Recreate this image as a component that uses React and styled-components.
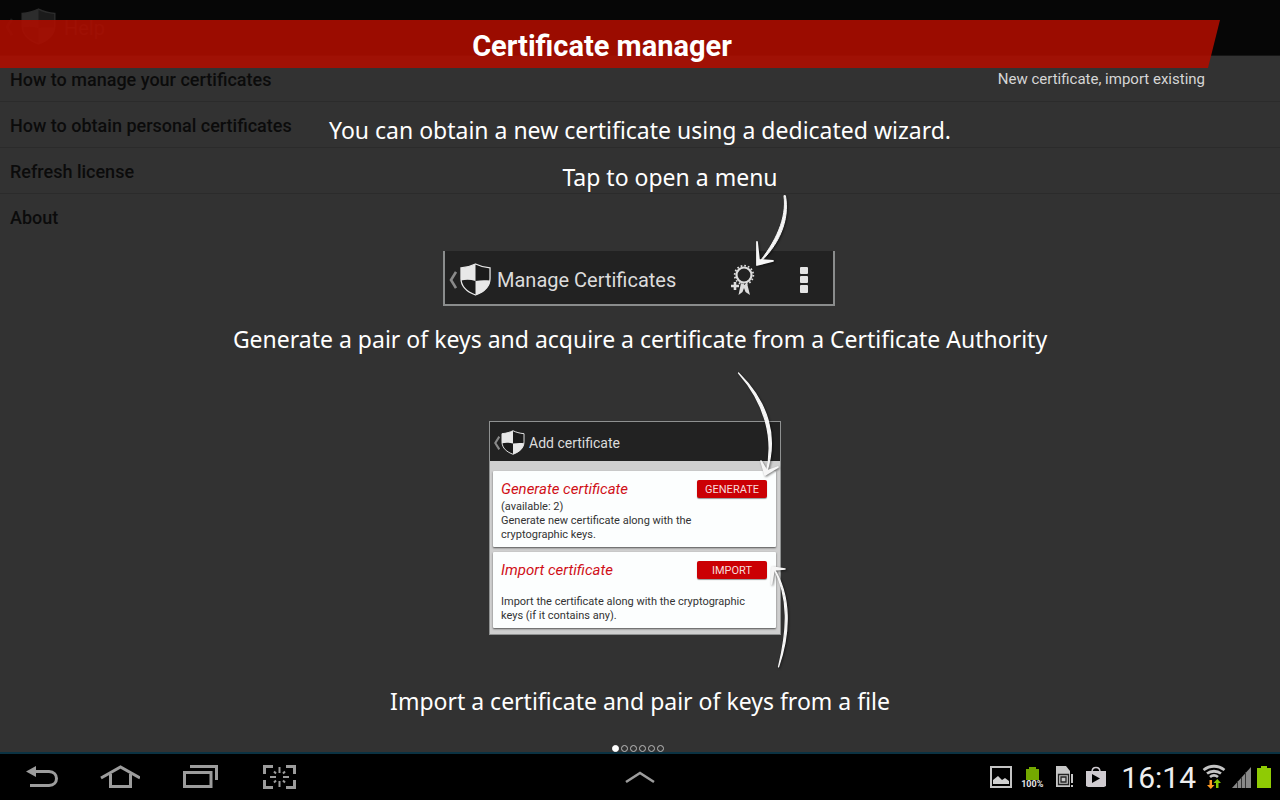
import React from "react";
import styled, { createGlobalStyle } from "styled-components";

const Global = createGlobalStyle`
  * { box-sizing: border-box; }
  body { margin: 0; background: #000; font-family: Roboto, sans-serif; }
  h1, h2, h3, p, ul { margin: 0; padding: 0; font-weight: normal; }
  svg { display: block; flex: none; }
`;

const Screen = styled.div`
  min-height: 100vh;
  display: grid;
  grid-template-rows: 1fr auto;
`;

const Stage = styled.div`
  display: grid;
  grid-template-columns: minmax(0, 1fr);
  background: #323232;
`;

const HelpPage = styled.div`
  grid-area: 1 / 1;
`;

const HelpHeader = styled.header`
  height: 56px;
  padding: 0 4px 2px;
  display: flex;
  align-items: center;
  gap: 8px;
  background: #060606;
  border-bottom: 1px solid #161616;
  color: #282828;
`;

const HelpTitle = styled.h2`
  padding-top: 2px;
  font-size: 20px;
`;

const HelpList = styled.ul`
  list-style: none;
`;

const HelpItem = styled.li`
  height: 46px;
  padding: 2px 10px 0;
  display: flex;
  align-items: center;
  border-bottom: 1px solid #2b2b2b;
  &:last-child { border-bottom-color: transparent; }
`;

const HelpLink = styled.a`
  color: #0b0b0b;
  font-size: 18px;
  font-weight: 500;
  text-decoration: none;
`;

const Tutorial = styled.main`
  grid-area: 1 / 1;
  z-index: 1;
  padding-top: 20px;
  display: flex;
  flex-direction: column;
  align-items: center;
  color: #fff;
`;

const Banner = styled.h1`
  align-self: stretch;
  margin-right: 60px;
  padding: 4px 60px 0 44px;
  height: 48px;
  display: flex;
  align-items: center;
  justify-content: center;
  background: rgba(172, 13, 0, 0.9);
  clip-path: polygon(0 0, 100% 0, calc(100% - 12px) 100%, 0 100%);
  font-size: 29px;
  font-weight: 700;
`;

const BannerNote = styled.p`
  align-self: flex-end;
  margin-right: 75px;
  font-size: 15px;
  line-height: 22px;
  color: #d6d6d6;
`;

const Hint = styled.p`
  margin-top: ${(p) => p.$top}px;
  padding-left: ${(p) => p.$indent || 0}px;
  font-family: "Noto Sans", sans-serif;
  font-size: 23px;
  line-height: 32px;
  text-align: center;
`;

const Figure = styled.figure`
  position: relative;
  width: ${(p) => p.$width}px;
  margin: ${(p) => p.$top}px ${(p) => p.$right || 0}px 0 0;
`;

const Arrow = styled.svg`
  position: absolute;
  left: ${(p) => p.$left}px;
  top: ${(p) => p.$top}px;
  fill: #f6f6f6;
  stroke: #f6f6f6;
  stroke-linecap: round;
  stroke-linejoin: round;
  filter: drop-shadow(1px 1px 1px rgba(0, 0, 0, 0.5));
`;

const ActionBar = styled.div`
  height: 55px;
  padding: 4px 24px 0 3px;
  display: flex;
  align-items: center;
  background: #222;
  border: 2px solid #8a8c8c;
  border-top: 0;
`;

const ActionTitle = styled.h3`
  margin-left: ${(p) => p.$gap}px;
  flex: 1;
  font-size: ${(p) => p.$size}px;
  color: #dcdcdc;
`;

const IconButton = styled.button`
  padding: 0;
  border: 0;
  background: none;
  margin-left: ${(p) => p.$left || 0}px;
`;

const Dialog = styled.div`
  background: #cfcfcf;
  border: 1px solid #8f9191;
  padding-bottom: 6px;
`;

const DialogBar = styled.div`
  height: 39px;
  padding: 2px 2px 0;
  display: flex;
  align-items: center;
  background: #222;
`;

const Card = styled.section`
  height: 76px;
  margin: ${(p) => p.$top}px 4px 0 3px;
  padding: 8px 9px 0 8px;
  background: #fcfefe;
  border-radius: 1px;
  box-shadow: 0 1px 2px rgba(0, 0, 0, 0.6);
`;

const CardHead = styled.div`
  display: flex;
  align-items: center;
  justify-content: space-between;
  height: 20px;
`;

const CardTitle = styled.h3`
  font-size: 15px;
  font-style: italic;
  color: #d01018;
`;

const CardButton = styled.button`
  width: 70px;
  height: 18px;
  padding: 0;
  border: 0;
  border-radius: 2px;
  background: #cb0004;
  box-shadow: 0 1px 1px rgba(0, 0, 0, 0.4);
  color: #f6dcdc;
  font: 11px/20px Roboto, sans-serif;
`;

const CardText = styled.p`
  margin-top: ${(p) => p.$top}px;
  font-size: 11px;
  line-height: 14px;
  color: #333;
  white-space: pre-line;
`;

const Dots = styled.div`
  margin-top: auto;
  padding-right: 4px;
  height: 8px;
  display: flex;
  align-items: flex-end;
  gap: 2px;
`;

const Dot = styled.button`
  width: 7px;
  height: 7px;
  padding: 0;
  border: 1px solid ${(p) => (p.$on ? "#fff" : "#bbb")};
  border-radius: 50%;
  background: ${(p) => (p.$on ? "#fff" : "none")};
`;

const NavBar = styled.footer`
  height: 48px;
  display: grid;
  grid-template-columns: 1fr auto 1fr;
  align-items: center;
  background: #000;
  border-top: 2px solid #0b3242;
`;

const NavKeys = styled.nav`
  display: flex;
`;

const NavKey = styled.button`
  width: 80px;
  height: 46px;
  padding: 0;
  border: 0;
  background: none;
  display: flex;
  align-items: center;
  justify-content: center;
  svg { fill: none; stroke: #9c9c9c; stroke-width: 3; }
`;

const Status = styled.div`
  display: flex;
  align-items: center;
  justify-content: flex-end;
  padding-right: 9px;
`;

const StatusIcon = styled.svg`
  margin-left: ${(p) => p.$gap}px;
`;

const Charge = styled.div`
  margin-left: 8px;
  width: 24px;
  display: flex;
  flex-direction: column;
  align-items: center;
  font: 700 9px/8px Roboto, sans-serif;
  color: #e4e4e4;
`;

const Clock = styled.time`
  margin-left: 15px;
  padding-top: 2px;
  font-size: 30px;
  line-height: 44px;
  color: #eee;
`;

function Shield({ width, height, light = "#e8e8e8" }) {
  return (
    <svg width={width} height={height} viewBox="0 0 32 34">
      <path d="M16 1 C20 3 25 4.500 31 5 V16 C31 25 24 30 16 33 C8 30 1 25 1 16 V5 C7 4.500 12 3 16 1Z" fill="#1b1b1b" stroke={light} strokeWidth="1.300" />
      <path d="M16 1 V18.500 C11 17 6 17 1 18 V5 C7 4.500 12 3 16 1Z" fill={light} />
      <path d="M16 18.500 C21 17.500 26 17.500 31 18 C30 26 23 31 16 33Z" fill={light} />
    </svg>
  );
}

function Back({ height = 20, color = "#8a8a8a" }) {
  return (
    <svg width="9" height={height} viewBox="0 0 9 20" fill="none" stroke={color} strokeWidth="2.600">
      <path d="M8 2 L3 10 L8 18" />
    </svg>
  );
}

function Ribbon() {
  return (
    <svg width="26" height="32" viewBox="0 0 26 32" fill="none" stroke="#ddd">
      <circle cx="14" cy="11" r="7.500" strokeWidth="2.200" />
      <circle cx="14" cy="11" r="9.300" strokeWidth="1.800" strokeDasharray="1.700 1.950" />
      <path d="M11 19 L8.500 31 L12.500 28 L14 24 L15.500 28 L20 31 L17 19 L14 21Z" fill="#ddd" stroke="none" />
      <path d="M5 18 V26 M1 22 H9" strokeWidth="2.600" />
    </svg>
  );
}

const helpItems = [
  "How to manage your certificates",
  "How to obtain personal certificates",
  "Refresh license",
  "About",
];

export default function App() {
  return (
    <Screen>
      <Global />
      <Stage>
        <HelpPage>
          <HelpHeader>
            <Back color="#1a1a1a" />
            <Shield width={35} height={37} light="#2c2c2c" />
            <HelpTitle>Help</HelpTitle>
          </HelpHeader>
          <HelpList>
            {helpItems.map((t) => (
              <HelpItem key={t}><HelpLink href="#">{t}</HelpLink></HelpItem>
            ))}
          </HelpList>
        </HelpPage>

        <Tutorial>
          <Banner>Certificate manager</Banner>
          <BannerNote>New certificate, import existing</BannerNote>
          <Hint $top={24}>You can obtain a new certificate using a dedicated wizard.</Hint>
          <Hint $top={15} $indent={60}>Tap to open a menu</Hint>

          <Figure $width={392} $top={58} $right={2}>
            <ActionBar>
              <Back />
              <IconButton as="span" $left={3}><Shield width={31} height={33} /></IconButton>
              <ActionTitle $gap={6} $size={20}>Manage Certificates</ActionTitle>
              <IconButton aria-label="Add certificate"><Ribbon /></IconButton>
              <IconButton aria-label="More" $left={43}>
                <svg width="10" height="28" viewBox="0 0 10 28" fill="#e4e4e4">
                  <rect x="1" y="1" width="8" height="7" rx="1" />
                  <rect x="1" y="10" width="8" height="7" rx="1" />
                  <rect x="1" y="19" width="8" height="8" rx="1" />
                </svg>
              </IconButton>
            </ActionBar>
            <Arrow $left={307} $top={-61} width="45" height="80" viewBox="750 190 45 80">
              <path d="M784 196 C787 218 776 242 757 265 C779 246 790 220 785.500 196Z" strokeWidth="1" />
              <path d="M757 242 L757 265 L773 261 L759 260Z" strokeWidth="1.800" />
            </Arrow>
          </Figure>

          <Hint $top={17}>Generate a pair of keys and acquire a certificate from a Certificate Authority</Hint>

          <Figure $width={292} $top={66} $right={10}>
            <Dialog>
              <DialogBar>
                <Back height={16} />
                <Shield width={24} height={25} />
                <ActionTitle $gap={4} $size={14}>Add certificate</ActionTitle>
              </DialogBar>
              <Card $top={10}>
                <CardHead>
                  <CardTitle>Generate certificate</CardTitle>
                  <CardButton>GENERATE</CardButton>
                </CardHead>
                <CardText $top={1}>{"(available: 2)\nGenerate new certificate along with the\ncryptographic keys."}</CardText>
              </Card>
              <Card $top={5}>
                <CardHead>
                  <CardTitle>Import certificate</CardTitle>
                  <CardButton>IMPORT</CardButton>
                </CardHead>
                <CardText $top={15}>{"Import the certificate along with the cryptographic\nkeys (if it contains any)."}</CardText>
              </Card>
            </Dialog>
            <Arrow $left={241} $top={-56} width="60" height="120" viewBox="730 365 60 120">
              <path d="M738.500 373 C764 402 775 437 766 474 C779 437 768 402 738.500 373Z" strokeWidth="1.200" />
              <path d="M761 461 L765 475 L778 467 L767 471Z" strokeWidth="1.600" />
            </Arrow>
            <Arrow $left={271} $top={134} width="40" height="120" viewBox="760 555 40 120">
              <path d="M778.500 667 C787 632 790 598 773 567 C792 596 790 634 778.500 667Z" strokeWidth="1.200" />
              <path d="M771.500 584 L772 567 L785 569 L774 570Z" strokeWidth="1.600" />
            </Arrow>
          </Figure>

          <Hint $top={50}>Import a certificate and pair of keys from a file</Hint>
          <Dots>
            {[0, 1, 2, 3, 4, 5].map((i) => (
              <Dot key={i} $on={i === 0} aria-label={`Page ${i + 1}`} />
            ))}
          </Dots>
        </Tutorial>
      </Stage>

      <NavBar>
        <NavKeys>
          <NavKey aria-label="Back">
            <svg width="40" height="32" viewBox="20 761 40 32">
              <path d="M34 771.500 H49 C59 772 59 785 49 785.500 H30" />
              <path d="M26 771.500 L36 766 V777Z" fill="#9c9c9c" stroke="none" />
            </svg>
          </NavKey>
          <NavKey aria-label="Home">
            <svg width="40" height="32" viewBox="100 761 40 32">
              <path d="M101 778 L120.500 767 L140 778 M110.500 774 V786.500 H130.500 V774" />
            </svg>
          </NavKey>
          <NavKey aria-label="Recent apps">
            <svg width="40" height="32" viewBox="180 761 40 32">
              <path d="M184.500 772.500 H211 V786.500 H184.500Z M190 766.500 H216.500 V780" />
            </svg>
          </NavKey>
          <NavKey aria-label="Capture screen">
            <svg width="40" height="32" viewBox="260 761 40 32">
              <path d="M264.500 774 V766.500 H273 M286 766.500 H294.500 V774 M294.500 780 V787.500 H286 M273 787.500 H264.500 V780" />
              <path d="M279.500 767 V773 M279.500 781 V787 M270 777 H276 M283 777 H289 M274 771.500 L276 773.500 M285 771.500 L283 773.500 M274 782.500 L276 780.500 M285 782.500 L283 780.500" style={{ strokeWidth: 2 }} />
            </svg>
          </NavKey>
        </NavKeys>

        <NavKey aria-label="Show tray">
          <svg width="32" height="16" viewBox="0 0 32 16"><path d="M2 13 L16 4 L30 13" strokeWidth="2.600" /></svg>
        </NavKey>

        <Status>
          <StatusIcon $gap={0} width="22" height="22" viewBox="0 0 22 22">
            <rect x="1" y="1" width="20" height="20" fill="none" stroke="#c4c4c4" strokeWidth="2" />
            <path d="M3 18 V14 L8 10 L12 14 L15 12 L19 15 V18Z" fill="#d0d0d0" />
          </StatusIcon>
          <Charge>
            <svg width="13" height="13" viewBox="0 0 13 13"><path d="M3 0 H10 V2 H13 V13 H0 V2 H3Z" fill="#74a800" /></svg>
            100%
          </Charge>
          <StatusIcon $gap={12} width="18" height="22" viewBox="0 0 18 22">
            <path d="M0 0 H10 L14 5 V21 H0Z" fill="#c6c6c6" />
            <path d="M2.500 8.500 H12.500 V18.500 H2.500Z M5 11 H10 V16 H5Z" fill="none" stroke="#222" strokeWidth="1.300" />
            <path d="M16 8 V17 M16 19 V21" stroke="#c6c6c6" strokeWidth="2" />
          </StatusIcon>
          <StatusIcon $gap={12} width="20" height="22" viewBox="0 0 20 22">
            <path d="M6 6 C6 0 14 0 14 6" fill="none" stroke="#cfcbd0" strokeWidth="1.500" />
            <path d="M0 5 H20 V20 L18 21 H2 L0 20Z" fill="#cfcbd0" />
            <path d="M6 8 L14 12.500 L6 17Z" fill="#000" />
          </StatusIcon>
          <Clock>16:14</Clock>
          <StatusIcon $gap={6} width="24" height="26" viewBox="0 0 24 26">
            <g fill="none" stroke="#c4c4c4" strokeWidth="2.800">
              <path d="M1.500 6 C8 1 16 1 22.500 6" />
              <path d="M5 9.500 C9 6.500 15 6.500 19 9.500" />
              <path d="M8 13 C10.500 11 13.500 11 16 13" />
            </g>
            <path d="M7.500 16 H10 V21 H12.500 L8.800 25 L5 21 H7.500Z" fill="#ff9a22" />
            <path d="M14 24 H16.500 V19 H19 L15.300 15 L11.500 19 H14Z" fill="#86c800" />
          </StatusIcon>
          <StatusIcon $gap={6} width="19" height="22" viewBox="0 0 19 22">
            <path d="M0 22 L19 1 V22Z" fill="#888" />
            <path d="M5.500 15 V22 M9.500 11 V22 M13.500 6 V22" stroke="#333" />
          </StatusIcon>
          <StatusIcon $gap={6} width="14" height="22" viewBox="0 0 14 22">
            <path d="M4 0 H10 V2 H14 V22 H0 V2 H4Z" fill="#8fcb04" />
          </StatusIcon>
        </Status>
      </NavBar>
    </Screen>
  );
}
